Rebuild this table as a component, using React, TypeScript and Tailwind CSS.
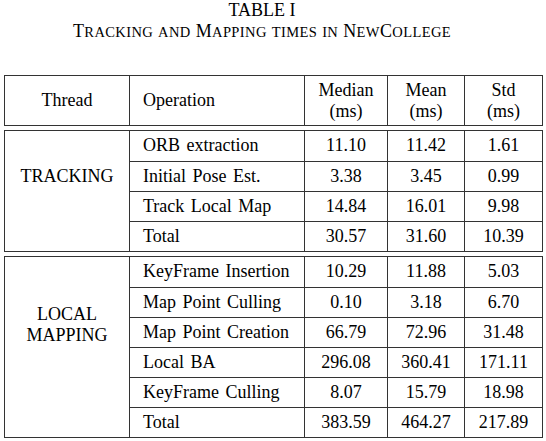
const tracking = [
  ["ORB extraction", "11.10", "11.42", "1.61"],
  ["Initial Pose Est.", "3.38", "3.45", "0.99"],
  ["Track Local Map", "14.84", "16.01", "9.98"],
  ["Total", "30.57", "31.60", "10.39"],
];

const mapping = [
  ["KeyFrame Insertion", "10.29", "11.88", "5.03"],
  ["Map Point Culling", "0.10", "3.18", "6.70"],
  ["Map Point Creation", "66.79", "72.96", "31.48"],
  ["Local BA", "296.08", "360.41", "171.11"],
  ["KeyFrame Culling", "8.07", "15.79", "18.98"],
  ["Total", "383.59", "464.27", "217.89"],
];

function Sc({ big, small }: { big: string; small: string }) {
  return (
    <>
      <span className="text-[18px]">{big}</span>
      <span className="text-[14.5px]">{small}</span>
    </>
  );
}

function Block({
  label,
  rows,
  labelPad,
}: {
  label: React.ReactNode;
  rows: string[][];
  labelPad: string;
}) {
  return (
    <div className="mt-[4px] flex border border-[#333]">
      <div
        className={`w-[125px] shrink-0 border-r border-[#333] text-center leading-[21px] ${labelPad}`}
      >
        {label}
      </div>
      <div className="flex-1">
        {rows.map((r, i) => (
          <div
            key={r[0] + i}
            className={`flex h-[30px] items-center ${i > 0 ? "border-t border-[#333]" : ""}`}
          >
            <div className="flex h-full w-[175px] shrink-0 items-center border-r border-[#333] pb-[1px] pl-[13px] [word-spacing:2px]">
              {r[0]}
            </div>
            <div className="flex h-full w-[83px] shrink-0 items-center justify-center border-r border-[#333] pb-[1px]">
              {r[1]}
            </div>
            <div className="flex h-full w-[77px] shrink-0 items-center justify-center border-r border-[#333] pb-[1px]">
              {r[2]}
            </div>
            <div className="flex h-full flex-1 items-center justify-center pb-[1px]">
              {r[3]}
            </div>
          </div>
        ))}
      </div>
    </div>
  );
}

export default function App() {
  return (
    <div className="h-[441px] w-[546px] bg-white font-['Liberation_Serif',serif] text-[18px] text-black">
      {/* CAPTION */}
      <div className="pr-[22px] text-center">
        <div className="leading-[21px]">TABLE I</div>
        <div className="leading-[20px] tracking-[0.4px]">
          <Sc big="T" small="RACKING" /> <Sc big="" small="AND" />{" "}
          <Sc big="M" small="APPING" /> <Sc big="" small="TIMES" />{" "}
          <Sc big="" small="IN" /> <Sc big="N" small="EW" />
          <Sc big="C" small="OLLEGE" />
        </div>
      </div>

      {/* TABLE */}
      <div className="ml-[4px] mt-[33px] w-[539px]">
        <div className="flex h-[51px] border border-[#333]">
          <div className="flex w-[125px] shrink-0 items-center justify-center border-r border-[#333]">
            Thread
          </div>
          <div className="flex w-[175px] shrink-0 items-center border-r border-[#333] pl-[13px]">
            Operation
          </div>
          <div className="flex w-[83px] shrink-0 flex-col items-center justify-center border-r border-[#333] leading-[21px]">
            <span>Median</span>
            <span>(ms)</span>
          </div>
          <div className="flex w-[77px] shrink-0 flex-col items-center justify-center border-r border-[#333] leading-[21px]">
            <span>Mean</span>
            <span>(ms)</span>
          </div>
          <div className="flex flex-1 flex-col items-center justify-center leading-[21px]">
            <span>Std</span>
            <span>(ms)</span>
          </div>
        </div>

        <Block label="TRACKING" rows={tracking} labelPad="pt-[35px]" />
        <Block
          label={
            <>
              LOCAL
              <br />
              MAPPING
            </>
          }
          rows={mapping}
          labelPad="pt-[47px]"
        />
      </div>
    </div>
  );
}
